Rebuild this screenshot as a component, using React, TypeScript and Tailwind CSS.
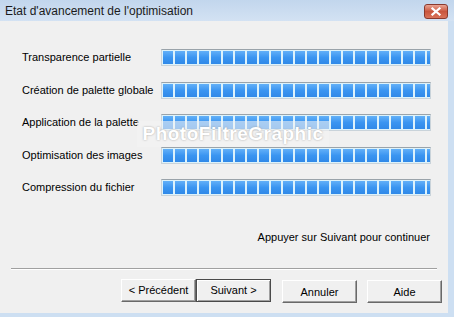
import React from 'react';

const steps = [
  'Transparence partielle',
  'Création de palette globale',
  'Application de la palette',
  'Optimisation des images',
  'Compression du fichier',
];

const blocks = Array.from({ length: 23 });

const ProgressBar: React.FC = () => (
  <div className="w-[270px] h-[17px] flex gap-[2px] overflow-hidden px-[1px] py-[1px] bg-[#dcf2fb] border border-[#c9d3da] border-t-[#9aa3aa]">
    {blocks.map((_, i) => (
      <div
        key={i}
        className="w-[10px] h-full shrink-0 bg-gradient-to-b from-[#62b0f8] via-[#3a95f1] to-[#3089e8]"
      />
    ))}
  </div>
);

const WinButton: React.FC<{ label: string; primary?: boolean }> = ({ label, primary }) => (
  <button
    className={`w-[75px] h-[23px] text-[11px] text-black bg-[#f0f0f0] border ${
      primary
        ? 'border-[#4a4a4a] shadow-[inset_1px_1px_0_#ffffff,inset_-1px_-1px_0_#a0a0a0]'
        : 'border-t-white border-l-white border-r-[#696969] border-b-[#696969] shadow-[inset_-1px_-1px_0_#a0a0a0]'
    }`}
  >
    {label}
  </button>
);

export default function App() {
  return (
    <div
      className="relative w-[454px] h-[317px] overflow-hidden bg-[#cddff2] flex flex-col"
      style={{ fontFamily: '"Liberation Sans", Arial, sans-serif' }}
    >
      {/* title bar */}
      <div className="h-[21px] shrink-0 flex items-center justify-between pl-[5px] pr-[6px] bg-gradient-to-b from-[#c2d6ed] to-[#d3e2f3]">
        <span className="text-[12px] text-[#1b1b1b] leading-none mt-[1px]">Etat d'avancement de l'optimisation</span>
        <div className="w-[24px] h-[15px] mt-[1px] rounded-[3px] border border-[#8a3a2e] bg-gradient-to-b from-[#e9a493] via-[#c9563e] to-[#d9735a] flex items-center justify-center">
          <svg width="10" height="9" viewBox="0 0 10 9">
            <path d="M1.5 1.5 L8.5 7.5 M8.5 1.5 L1.5 7.5" stroke="#ffffff" strokeWidth="2.2" strokeLinecap="square" />
          </svg>
        </div>
      </div>

      <div className="flex-1 flex">
        <div className="flex-1 bg-[#f0f0f0] flex flex-col">
          {/* steps */}
          <div className="pt-[28px] pl-[22px] flex flex-col gap-[15.5px]">
            {steps.map(s => (
              <div key={s} className="flex items-center h-[17px]">
                <span className="w-[139px] text-[11px] text-black">{s}</span>
                <ProgressBar />
              </div>
            ))}
          </div>

          <div className="mt-[33px] pr-[18px] text-right text-[11px] text-black">Appuyer sur Suivant pour continuer</div>

          {/* separator */}
          <div className="mt-[22px] mx-[11px] h-[2px] border-t border-[#a0a0a0] border-b border-b-white" />

          {/* buttons */}
          <div className="mt-[9px] pl-[121px] flex">
            <WinButton label="< Précédent" />
            <WinButton label="Suivant >" primary />
            <div className="ml-[11px]">
              <WinButton label="Annuler" />
            </div>
            <div className="ml-[10px]">
              <WinButton label="Aide" />
            </div>
          </div>
        </div>
        <div className="w-[6px] bg-[#cddff2]" />
      </div>
      <div className="h-[4px] shrink-0 bg-[#cddff2]" />

      {/* watermark */}
      <div className="absolute left-[137px] top-[121px] w-[192px] h-[26px] bg-[#f4f4f4]/60 flex items-center justify-center">
        <span className="text-[19px] font-bold tracking-[0.5px] text-white [text-shadow:0_0_2px_rgba(140,140,140,0.8)]">PhotoFiltreGraphic</span>
      </div>
    </div>
  );
}
